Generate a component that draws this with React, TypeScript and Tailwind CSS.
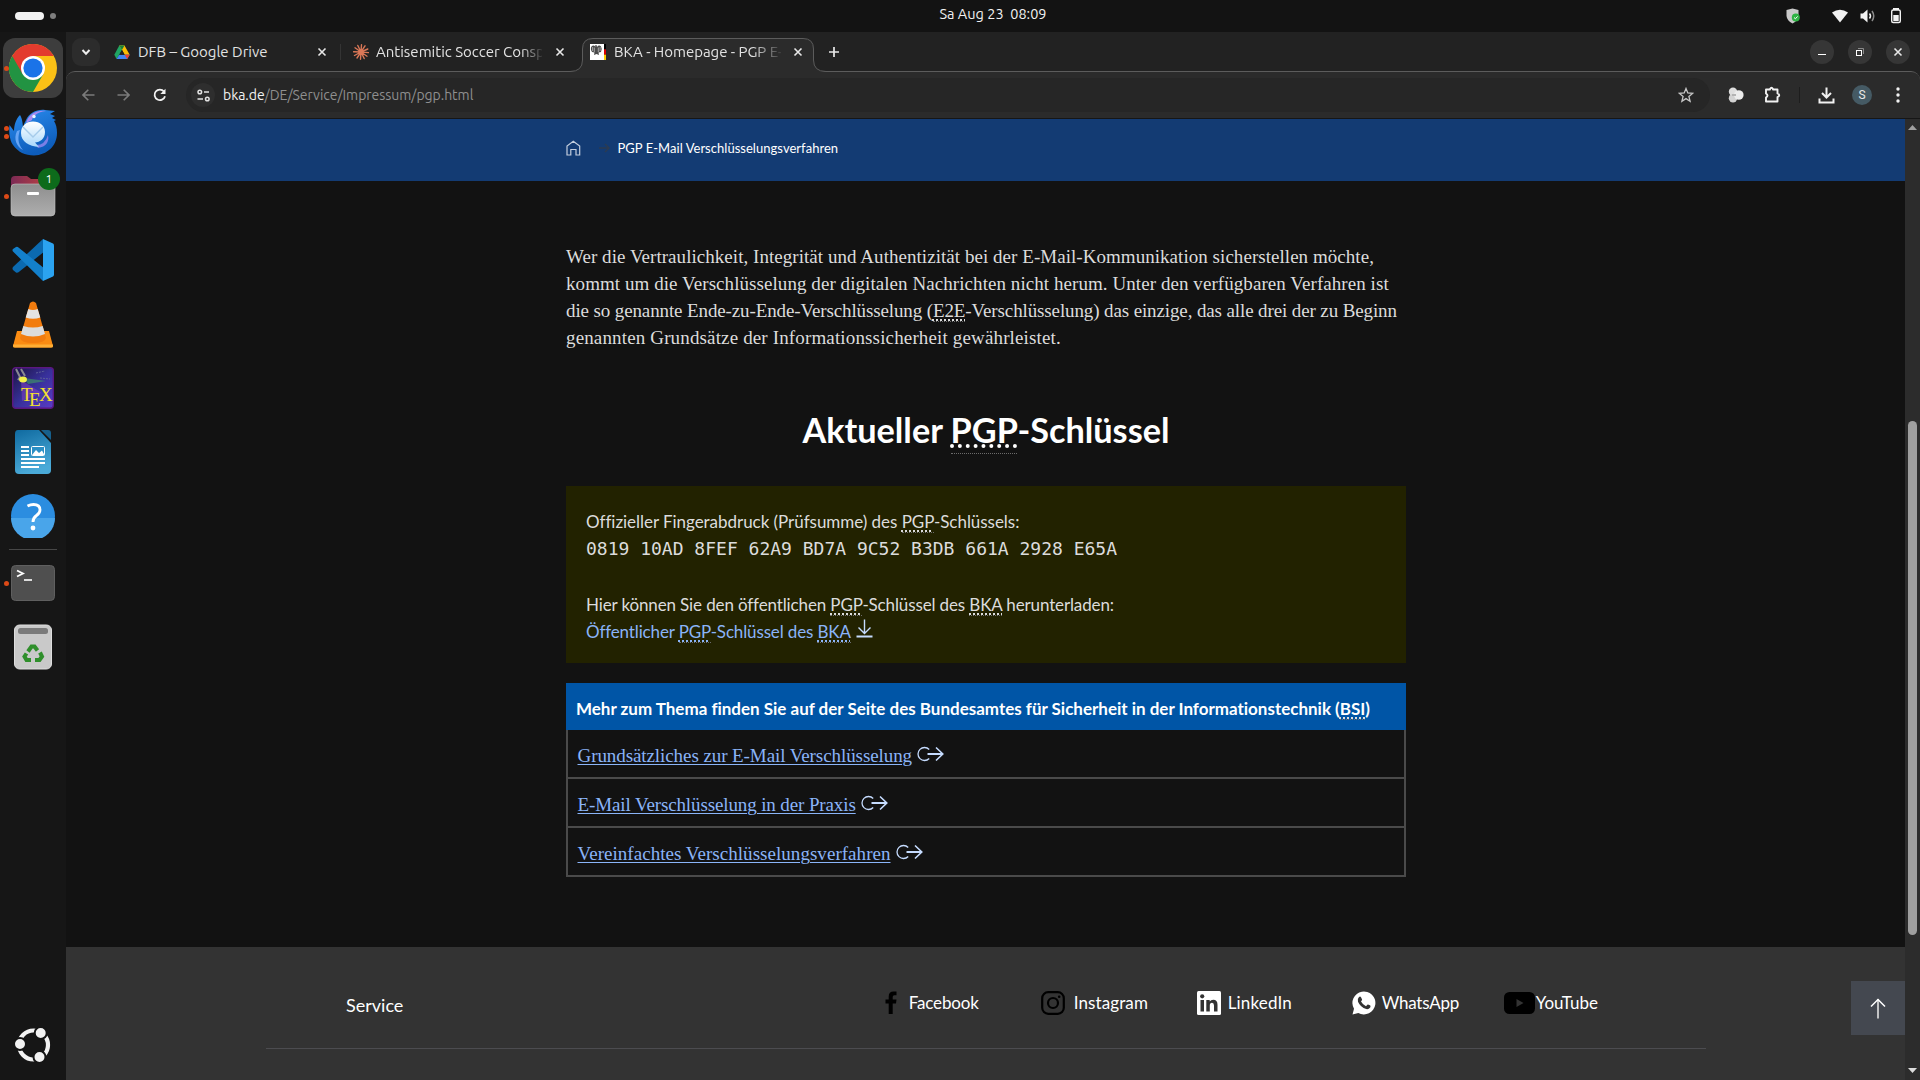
import React from "react";

type Kids = { children: React.ReactNode };

/* ---------- Dock icons ---------- */

const Chrome = () => (
  <svg width="48" height="48" viewBox="0 0 48 48">
    <circle cx="24" cy="24" r="24" fill="#fbc116" />
    <path d="M24 24 L3.2 12 A24 24 0 0 0 24 48 L34.4 30 Z" fill="#229342" />
    <path d="M3.2 12 A24 24 0 0 1 44.8 12 L24 12 L13.6 30 Z" fill="#e33b2e" />
    <circle cx="24" cy="24" r="12" fill="#fff" />
    <circle cx="24" cy="24" r="9.6" fill="#1a73e8" />
  </svg>
);

const Thunderbird = () => (
  <svg className="mt-0.5" width="48" height="48" viewBox="0 0 48 48">
    <defs>
      <linearGradient id="tb" x1="0" y1="0" x2="0.4" y2="1">
        <stop offset="0" stopColor="#2b8df0" />
        <stop offset="1" stopColor="#0d5cba" />
      </linearGradient>
      <linearGradient id="tbw" x1="0" y1="0" x2="0" y2="1">
        <stop offset="0" stopColor="#ffffff" />
        <stop offset="1" stopColor="#a9d8fb" />
      </linearGradient>
    </defs>
    <path d="M0.500 16 C0 22 0 30 4 36 C9 43 16 46.500 25 46.500 C38 46 48 37 48 24 C48 19 47 15 45 12 L47 11 L43 9 L46 7 L41 5 L46 2 L36 1 C28 0 20 4 17 11 L15 15 L14 22 C14 14 13 9 11 6 C7 10 5 16 5 22 Z" fill="url(#tb)" />
    <path d="M17 14 C20 5 27 1 37 2 C28 3 24 7 23 11 Z" fill="#a88bf0" />
    <path d="M8 22 C4 30 8 38 14 41 C8 34 9 27 11 21 Z" fill="#67a5f5" />
    <path d="M27 36 Q36 36 39 26 Q41 37 29 39Z" fill="#7b7fe6" />
    <circle cx="25" cy="7.500" r="1.700" fill="#e8f4ff" />
    <path d="M12 24 C12 17 17 12.500 24 12.500 C31 12.500 36 17 36 23 C36 30 31 33 26 33.500 L30 38 C20 37 12 33 12 24 Z" fill="url(#tbw)" />
    <path d="M14 18 L24 28 L34 18" fill="none" stroke="#a5cbea" strokeWidth="1.400" />
  </svg>
);

const Files = () => (
  <svg className="mt-0.5" width="46" height="44" viewBox="0 0 46 44">
    <defs>
      <linearGradient id="fb" x1="0" x2="1">
        <stop offset="0" stopColor="#7c2a55" />
        <stop offset="1" stopColor="#c8473e" />
      </linearGradient>
      <linearGradient id="ff" x1="0" y1="0" x2="0" y2="1">
        <stop offset="0" stopColor="#8e8e8e" />
        <stop offset="1" stopColor="#aeaeae" />
      </linearGradient>
    </defs>
    <path d="M1 5 Q1 1 5 1 H17 L21 4 H41 Q45 4 45 8 V24 H1 Z" fill="url(#fb)" />
    <rect x="1" y="9" width="44" height="32" rx="4" fill="url(#ff)" stroke="#c2c2c2" strokeWidth="0.600" />
    <rect x="17" y="17" width="12" height="3" rx="1" fill="#fff" />
  </svg>
);

const Code = () => (
  <svg width="42" height="42" viewBox="0 0 42 42">
    <path d="M31 0 L1 28 Q0 29.500 1 31 L4 33.500 Q5.500 34 6.500 33.200 L33 12 Z" fill="#0b6ab0" />
    <path d="M1 12.500 L31 42 L33 30 L6.500 8.500 Q5.500 7.500 4 8 L1 10 Q0 11 1 12.500Z" fill="#1380cb" />
    <path d="M31 0 L41 4.500 Q42 5 42 6.500 V35.500 Q42 37 41 37.500 L31 42 Z" fill="#2ba3f0" />
  </svg>
);

const Vlc = () => (
  <svg width="42" height="48" viewBox="0 0 42 48">
    <path d="M5 31 H37 L41 46 Q41 47.500 39 47.500 H3 Q1 47.500 1 46 Z" fill="#fb8c12" />
    <path d="M1 44.500 H41 V46 Q41 47.500 39 47.500 H3 Q1 47.500 1 46Z" fill="#ffae34" />
    <path d="M18 3 Q21 0 24 3 L34 38 Q33 43 21 43 Q9 43 8 38 Z" fill="#f27c0e" />
    <path d="M16.300 9 Q21 11 25.700 9 L28.300 17.500 Q21 20 13.700 17.500 Z" fill="#e4e4e4" />
    <path d="M11.300 26 Q21 29 30.700 26 L33 34 Q21 39 9 34 Z" fill="#dcdcdc" />
  </svg>
);

const Tex = () => (
  <svg width="42" height="42" viewBox="0 0 42 42">
    <defs>
      <linearGradient id="tx" x1="0" y1="0" x2="1" y2="1">
        <stop offset="0" stopColor="#1b1440" />
        <stop offset="0.500" stopColor="#37309a" />
        <stop offset="1" stopColor="#5a3cc8" />
      </linearGradient>
    </defs>
    <rect x="0.700" y="0.700" width="40.600" height="40.600" rx="3" fill="url(#tx)" stroke="#5b1780" strokeWidth="1.400" />
    <path d="M9 13 L30 26 L10 34 Z" fill="#7a3fc0" opacity="0.600" />
    <path d="M12 11 L34 14 L16 17 Z" fill="#3e8f6c" opacity="0.700" />
    <path d="M4 2 L8 10 L6 13 M9 2 L13 9" stroke="#8a8a92" strokeWidth="2" fill="none" />
    <ellipse cx="11" cy="12.500" rx="4" ry="3" fill="#f1f04a" />
    <path d="M24 6 L33 4 M28 11 L38 12" stroke="#5c5f99" strokeWidth="1" strokeDasharray="2 1" />
    <g fill="#f4e02c" fontFamily="Liberation Serif, serif" fontSize="19">
      <text x="9" y="34">T</text>
      <text x="17" y="39">E</text>
      <text x="27" y="34">X</text>
    </g>
  </svg>
);

const Writer = () => (
  <svg width="38" height="46" viewBox="0 0 38 46">
    <defs>
      <linearGradient id="wr" x1="0" y1="0" x2="0.300" y2="1">
        <stop offset="0" stopColor="#0f6aa0" />
        <stop offset="1" stopColor="#4aaad8" />
      </linearGradient>
    </defs>
    <path d="M4 1 H25 L37 14 V41 Q37 45 33 45 H5 Q1 45 1 41 V5 Q1 1 4 1Z" fill="url(#wr)" />
    <path d="M27 1 H34 Q37 1 37 4 V11 Z" fill="#17608c" />
    <g fill="#fff">
      <rect x="7" y="17" width="8" height="2" />
      <rect x="7" y="21" width="8" height="2" />
      <rect x="7" y="25" width="8" height="2" />
      <rect x="7" y="29" width="24" height="2" />
      <rect x="7" y="33" width="24" height="2" />
      <rect x="7" y="37" width="18" height="2" />
    </g>
    <rect x="17.500" y="17.500" width="13" height="9" rx="1" fill="#2b8fc5" stroke="#fff" />
    <path d="M18 26 L22 21 L25 24 L28 21.500 L30.500 26Z" fill="#fff" />
  </svg>
);

const Help = () => (
  <svg width="44" height="44" viewBox="0 0 44 44">
    <circle cx="22" cy="22" r="22" fill="#2b8de0" />
    <path d="M0 24 H44 A22 22 0 0 1 0 24Z" fill="#49a5ea" />
    <path d="M16.500 12 Q19.500 10.500 22.500 10.500 Q29 10.500 29 16 Q29 19 25.500 21.500 Q22 24 22 28" fill="none" stroke="#fff" strokeWidth="2.800" />
    <circle cx="22" cy="34" r="2.400" fill="#fff" />
  </svg>
);

const Terminal = () => (
  <svg width="44" height="36" viewBox="0 0 44 36">
    <rect x="0.500" y="0.500" width="43" height="35" rx="4" fill="#4f4f4f" stroke="#5f5f5f" />
    <path d="M6 5.500 L12 8.500 L6 11.500" fill="none" stroke="#fff" strokeWidth="1.800" />
    <path d="M13 15 H21" stroke="#fff" strokeWidth="1.600" />
  </svg>
);

const Trash = () => (
  <svg width="38" height="46" viewBox="0 0 38 46">
    <rect x="0.500" y="1" width="37" height="44" rx="5" fill="#c9c9c9" stroke="#dedede" />
    <rect x="4" y="4" width="30" height="6" rx="2.500" fill="#7a7a7a" />
    <g fill="none" stroke="#2f8f2b" strokeWidth="4">
      <path d="M14 27.500 L17.500 22.500 H20.500 L23.500 26.500" />
      <path d="M26 28.500 L28 32.500 L25.500 36 H21" />
      <path d="M17 36 H12.500 L10.500 32.500 L12.500 29.500" />
    </g>
  </svg>
);

const Ubuntu = () => (
  <svg width="38" height="36" viewBox="0 0 38 36">
    <circle cx="19.500" cy="18" r="14.500" fill="none" stroke="#f2f2f2" strokeWidth="4.200" />
    <g fill="#f2f2f2" stroke="#151515" strokeWidth="2">
      <circle cx="6" cy="17" r="6" />
      <circle cx="26.700" cy="6" r="6" />
      <circle cx="25.500" cy="30" r="6" />
    </g>
  </svg>
);

function DockItem({ dots = 0, active = false, children }: Kids & { dots?: number; active?: boolean }) {
  return (
    <div className="flex h-16 w-[66px] items-center">
      <div className="flex w-[9px] shrink-0 flex-col items-end gap-[3px]">
        {Array.from({ length: dots }, (_, i) => (
          <i key={i} className="z-10 h-[5px] w-[5px] rounded-full bg-[#dc4a17]" />
        ))}
      </div>
      <div className={active ? "-ml-1.5 flex h-[60px] w-[60px] items-center justify-center rounded-xl bg-[#3d3d3d]" : "flex w-12 items-center justify-center"}>
        {children}
      </div>
    </div>
  );
}

function Dock() {
  return (
    <aside className="flex w-[66px] shrink-0 flex-col bg-[#161616] pt-1">
      <DockItem dots={1} active><Chrome /></DockItem>
      <DockItem dots={2}><Thunderbird /></DockItem>
      <DockItem dots={1}>
        <div className="relative">
          <Files />
          <span className="absolute -top-[5px] left-[28px] flex h-[22px] w-[22px] items-center justify-center rounded-full bg-[#0d6b1b] text-[12px] text-white">1</span>
        </div>
      </DockItem>
      <DockItem><Code /></DockItem>
      <DockItem><Vlc /></DockItem>
      <DockItem><Tex /></DockItem>
      <DockItem><Writer /></DockItem>
      <DockItem><Help /></DockItem>
      <div className="mx-[9px] my-px h-px bg-[#474747]" />
      <DockItem dots={1}><Terminal /></DockItem>
      <DockItem><Trash /></DockItem>
      <div className="mt-auto mb-[17px] ml-[14px]"><Ubuntu /></div>
    </aside>
  );
}

/* ---------- Top bar ---------- */

function TopBar() {
  return (
    <header className="grid h-8 shrink-0 grid-cols-[933px_120px_1fr] items-center bg-[#131313] text-[14.500px] text-[#f2f2f2]">
      <div className="flex items-center gap-1.5 pl-[15px]">
        <i className="h-2 w-[29px] rounded-full bg-[#f2f2f2]" />
        <i className="h-1.5 w-1.5 rounded-full bg-[#7e7e7e]" />
      </div>
      <div className="-mt-[3px] text-center text-[14.500px] leading-none whitespace-pre">Sa Aug 23  08:09</div>
      <div className="flex items-center justify-end pr-[18px]">
        <svg className="mr-[32px]" width="14" height="16" viewBox="0 0 14 16">
          <path d="M0.500 2 L6.500 0.500 L12.500 2 V8 Q12 12.500 6.500 15.500 Q1 12.500 0.500 8Z" fill="#c9c9c9" />
          <circle cx="9.800" cy="9.500" r="4" fill="#2fb344" />
          <path d="M8 9.500 L9.400 10.800 L11.600 8.400" fill="none" stroke="#fff" />
        </svg>
        <svg className="mr-[12px]" width="16" height="14" viewBox="0 0 16 14">
          <path d="M0 3.500 Q8 -2 16 3.500 L8 13.500Z" fill="#f2f2f2" />
        </svg>
        <svg className="mr-[14px]" width="16" height="16" viewBox="0 0 16 16">
          <path d="M0.500 5.500 H3 L7.500 1.500 V14.500 L3 10.500 H0.500Z" fill="#f2f2f2" />
          <path d="M9.500 5.500 Q11.500 8 9.500 10.500" fill="none" stroke="#f2f2f2" strokeWidth="1.500" />
          <path d="M12 3 Q15.500 8 12 13" fill="none" stroke="#8b8b8b" strokeWidth="1.500" />
        </svg>
        <svg width="12" height="16" viewBox="0 0 12 16">
          <rect x="3" y="0" width="6" height="2" fill="#f2f2f2" />
          <rect x="1.700" y="2" width="8.600" height="12.500" rx="1.500" fill="none" stroke="#f2f2f2" strokeWidth="1.400" />
          <rect x="3.300" y="7" width="5.400" height="6" fill="#f2f2f2" />
        </svg>
      </div>
    </header>
  );
}

/* ---------- Browser chrome ---------- */

const Cross = () => (
  <svg width="10" height="10" viewBox="0 0 10 10" className="shrink-0">
    <path d="M1.500 1.500 L8.500 8.500 M8.500 1.500 L1.500 8.500" stroke="#e8e8e8" strokeWidth="1.600" />
  </svg>
);

const Drive = () => (
  <svg width="16" height="15" viewBox="0 0 16 15" className="shrink-0">
    <path d="M5.300 0.500 H10.500 L5.200 9.700 L2.600 14 L0.300 9.700Z" fill="#1fa463" />
    <path d="M5.300 0.500 H10.500 L15.700 9.700 H10.600 L8 5Z" fill="#fbbc04" />
    <path d="M5.200 9.700 H15.700 L13.200 14 H2.600Z" fill="#4285f4" />
    <path d="M10.600 9.700 H15.700 L13.200 14Z" fill="#ea4335" />
    <path d="M5.300 0.500 H10.500 L7.900 5Z" fill="#188038" />
    <path d="M8 5 L5.300 9.700 H10.700Z" fill="#222222" />
  </svg>
);

const Burst = () => (
  <svg width="16" height="16" viewBox="0 0 16 16" className="shrink-0">
    <g stroke="#d97757" strokeWidth="1.400" strokeLinecap="round">
      <path d="M8 8 L8.500 0.800 M8 8 L12 1.800 M8 8 L14.800 5 M8 8 L15.500 8.600 M8 8 L14 12.200 M8 8 L11.200 14.500 M8 8 L7.500 15.200 M8 8 L4 14 M8 8 L1.500 11.500 M8 8 L0.600 7.800 M8 8 L2 3.800 M8 8 L4.800 1.500" />
    </g>
    <circle cx="8" cy="8" r="2.600" fill="#d97757" />
  </svg>
);

const Eagle = () => (
  <svg width="16" height="16" viewBox="0 0 16 16" className="shrink-0">
    <rect width="14" height="16" fill="#fff" />
    <rect x="14" width="2" height="5.400" fill="#000" />
    <rect x="14" y="5.400" width="2" height="5.300" fill="#dd0000" />
    <rect x="14" y="10.700" width="2" height="5.300" fill="#ffce00" />
    <path d="M5 1.500 L6.500 1 L7 3 Q9 0.500 11 2.500 Q12.500 5 11 8 L8.500 8.500 L9 11 L6.500 10 L4 11 L4.500 8.500 L2 8 Q0 5 1.500 2.500 Q3.500 0.500 5.500 3Z" fill="#4a4a4a" />
    <path d="M2.600 3 V7 M4.300 3.500 V8 M8.300 3.500 V8 M10.100 3 V7" stroke="#cfcfcf" strokeWidth="0.700" />
  </svg>
);

function WinButton({ children }: Kids) {
  return <div className="flex h-6 w-6 items-center justify-center rounded-full bg-[#363636]">{children}</div>;
}

function TabStrip() {
  return (
    <div className="flex h-[39px] shrink-0 bg-[#222222] text-[15px] leading-none text-[#e3e3e3]">
      <div className="mt-1.5 ml-1.5 flex h-7 w-7 items-center justify-center rounded-[9px] bg-[#2c2c2c]">
        <svg width="10" height="10" viewBox="0 0 10 10"><path d="M1.500 3 L5 6.700 L8.500 3" fill="none" stroke="#eee" strokeWidth="2" /></svg>
      </div>
      <div className="flex h-10 w-[241px] items-center pl-3.5">
        <Drive />
        <span className="-mt-px ml-2 w-[180px] whitespace-nowrap">DFB – Google Drive</span>
        <Cross />
        <i className="ml-[13px] h-4 w-px shrink-0 bg-[#343434]" />
      </div>
      <div className="flex h-10 w-[241px] items-center pl-3">
        <Burst />
        <span className="-mt-px ml-[7px] w-[166px] overflow-hidden [mask-image:linear-gradient(to_right,#000_145px,transparent_168px)] py-1 whitespace-nowrap">Antisemitic Soccer Conspi</span>
        <span className="ml-[13px] flex"><Cross /></span>
      </div>
      <div className="relative z-10 flex h-10 w-[232px]">
        <svg className="absolute top-[6px] -left-3" width="256" height="34" viewBox="0 0 256 34">
          <path d="M0 33.500 Q12.500 33.500 12.500 22 V11 Q12.500 0.500 23 0.500 H233 Q243.500 0.500 243.500 11 V22 Q243.500 33.500 256 33.500 V34 H0Z" fill="#2b2b2b" />
          <path d="M0 33.500 Q12.500 33.500 12.500 22 V11 Q12.500 0.500 23 0.500 H233 Q243.500 0.500 243.500 11 V22 Q243.500 33.500 256 33.500" fill="none" stroke="#5c5c5c" />
        </svg>
        <div className="relative flex h-10 items-center pl-2">
          <Eagle />
          <span className="-mt-px ml-2 w-[167px] overflow-hidden [mask-image:linear-gradient(to_right,#000_138px,transparent_170px)] py-1 tracking-[-0.040px] whitespace-nowrap">BKA - Homepage - PGP E-</span>
          <span className="ml-3 flex"><Cross /></span>
        </div>
      </div>
      <div className="flex h-10 items-center pl-[14px]">
        <svg width="12" height="12" viewBox="0 0 12 12"><path d="M6 1 V11 M1 6 H11" stroke="#e8e8e8" strokeWidth="1.700" /></svg>
      </div>
      <div className="ml-auto flex h-10 items-center gap-[14px] pr-[10px]">
        <WinButton><svg width="10" height="10" viewBox="0 0 10 10"><path d="M1 7.500 H9" stroke="#fff" /></svg></WinButton>
        <WinButton>
          <svg width="10" height="10" viewBox="0 0 10 10">
            <path d="M3 1.500 H8.500 V7" fill="none" stroke="#8a8a8a" />
            <rect x="1.500" y="3.500" width="5" height="5" fill="none" stroke="#fff" />
          </svg>
        </WinButton>
        <WinButton><Cross /></WinButton>
      </div>
    </div>
  );
}

function Toolbar() {
  return (
    <div className="flex h-12 shrink-0 items-center rounded-t-[9px] border-t border-b border-t-[#5c5c5c] border-b-[#161616] bg-[#2b2b2b]">
      <div className="flex w-[120px] items-center pl-4">
        <svg width="13" height="12" viewBox="0 0 13 12"><path d="M12.500 6 H1 M6.300 0.700 L1 6 L6.300 11.300" fill="none" stroke="#7b7b7b" strokeWidth="1.600" /></svg>
        <svg className="ml-[22px]" width="13" height="12" viewBox="0 0 13 12"><path d="M0.500 6 H12 M6.700 0.700 L12 6 L6.700 11.300" fill="none" stroke="#7b7b7b" strokeWidth="1.600" /></svg>
        <svg className="ml-[23px]" width="14" height="14" viewBox="0 0 14 14">
          <path d="M12 8.200 A5.300 5.300 0 1 1 11 3.500" fill="none" stroke="#f2f2f2" strokeWidth="1.800" />
          <path d="M12.500 0.800 V6 H7.300Z" fill="#f2f2f2" />
        </svg>
      </div>
      <div className="flex h-[34px] w-[1524px] items-center rounded-full bg-[#262626]">
        <div className="ml-[5px] flex h-6 w-6 items-center justify-center rounded-full bg-[#2e2e2e]">
          <svg width="13" height="13" viewBox="0 0 13 13" fill="none" stroke="#e3e3e3" strokeWidth="1.500">
            <circle cx="2.800" cy="3" r="1.800" /><path d="M7 3 H12 M0.500 10 H6" /><circle cx="10.300" cy="10" r="1.800" />
          </svg>
        </div>
        <div className="ml-2 text-[14px] leading-none tracking-[-0.030px] text-[#8f8f8f]"><span className="text-[#f2f2f2]">bka.de</span>/DE/Service/Impressum/pgp.html</div>
        <svg className="mr-4 ml-auto" width="16" height="16" viewBox="0 0 16 16">
          <path d="M8 1.500 L9.800 6 L14.600 6.400 L10.900 9.500 L12.100 14.200 L8 11.600 L3.900 14.200 L5.100 9.500 L1.400 6.400 L6.200 6Z" fill="none" stroke="#c6c6c6" strokeWidth="1.300" />
        </svg>
      </div>
      <div className="flex flex-1 items-center pl-[18px]">
        <svg width="16" height="16" viewBox="0 0 16 16">
          <circle cx="5" cy="4.700" r="4.200" fill="#dedede" /><circle cx="5" cy="11.300" r="4.200" fill="#d2d2d2" /><circle cx="10.800" cy="8" r="4.800" fill="#ececec" />
          <path d="M4 8 H8" stroke="#b3b3b3" strokeWidth="2" />
        </svg>
        <svg className="ml-5" width="18" height="18" viewBox="0 0 18 18">
          <path d="M2 3.500 H6 V3 Q7.500 0.500 9 3 V3.500 H13.500 V7.500 Q17 9 13.500 11 V15.500 H2 V11.500 Q5 9.500 2 7.500Z" fill="none" stroke="#f2f2f2" strokeWidth="1.900" strokeLinejoin="round" />
        </svg>
        <i className="ml-[17px] h-4 w-px bg-[#1d1d1d]" />
        <svg className="ml-[18px]" width="17" height="17" viewBox="0 0 17 17">
          <path d="M8.500 0.500 V10 M4 6 L8.500 10.500 L13 6 M1.500 11.500 V15.500 H15.500 V11.500" fill="none" stroke="#f2f2f2" strokeWidth="2" />
        </svg>
        <span className="ml-[17px] flex h-5 w-5 items-center justify-center rounded-full bg-[#455a64] font-[Roboto,sans-serif] text-[12px] text-[#e8e8e8]">S</span>
        <svg className="ml-6" width="4" height="16" viewBox="0 0 4 16" fill="#f2f2f2"><circle cx="2" cy="2" r="1.700" /><circle cx="2" cy="8" r="1.700" /><circle cx="2" cy="14" r="1.700" /></svg>
      </div>
    </div>
  );
}

/* ---------- Web page ---------- */

function Abbr({ children, link = false }: Kids & { link?: boolean }) {
  return (
    <abbr className={(link ? "decoration-[#8ab4f8]" : "decoration-[#dcdcdc]") + " border-b border-dotted border-[#6b6b6b] underline decoration-dotted decoration-2 underline-offset-[2px]"}>
      {children}
    </abbr>
  );
}

function LinkRow({ children }: Kids) {
  return (
    <div className="flex h-[49px] items-center border-x-2 border-b-2 border-[#4a4a4a] pl-[9.500px]">
      <a className="mt-[4px] font-['Liberation_Serif',serif] text-[19px] leading-[27px] whitespace-nowrap text-[#8ab4f8] underline decoration-1 underline-offset-[2px]">{children}</a>
      <svg className="ml-[5px]" width="27" height="16" viewBox="0 0 27 16" fill="none" stroke="#c6dcff">
        <path d="M12.200 3.500 A6.500 6.500 0 1 0 12.200 12.500" strokeWidth="1.300" />
        <path d="M10.500 8 H26" strokeWidth="2" />
        <path d="M19 1.500 L25.800 8 L19 14.500" strokeWidth="1.600" />
      </svg>
    </div>
  );
}

function Social() {
  const label = "text-[17px] leading-[27px] whitespace-nowrap text-white";
  return (
    <div className="flex items-center">
      <div className="flex w-[156px] items-center">
        <svg width="12" height="23" viewBox="0 0 12 23"><path d="M3.700 23 V12.500 H0.500 V8.500 H3.700 V5.500 Q3.700 0.500 8.500 0.500 H11.500 V4.300 H9.300 Q7.700 4.300 7.700 6 V8.500 H11.500 L11 12.500 H7.700 V23Z" fill="#000" /></svg>
        <span className={label + " ml-3 tracking-[-0.150px]"}>Facebook</span>
      </div>
      <div className="flex w-[156px] items-center">
        <svg width="24" height="24" viewBox="0 0 24 24" fill="none" stroke="#000" strokeWidth="2.200">
          <rect x="1.200" y="1.200" width="21.600" height="21.600" rx="6" /><circle cx="12" cy="12" r="5" /><circle cx="18.200" cy="5.800" r="1.300" fill="#000" stroke="none" />
        </svg>
        <span className={label + " ml-[9px] tracking-[0.100px]"}>Instagram</span>
      </div>
      <div className="flex w-[155px] items-center">
        <svg width="24" height="24" viewBox="0 0 24 24">
          <rect width="24" height="24" rx="1.500" fill="#fff" />
          <path d="M3.500 9 H7 V20.500 H3.500Z M9.300 9 H12.700 V10.500 Q13.800 8.700 16.200 8.700 Q20.500 8.700 20.500 13.800 V20.500 H17 V14.500 Q17 11.800 15 11.800 Q12.800 11.800 12.800 14.500 V20.500 H9.300Z" fill="#333" />
          <circle cx="5.200" cy="5.300" r="2.100" fill="#333" />
        </svg>
        <span className={label + " ml-[7px] tracking-[0.150px]"}>LinkedIn</span>
      </div>
      <div className="flex w-[152px] items-center">
        <svg width="24" height="24" viewBox="0 0 24 24">
          <path d="M0.500 23.500 L2 17.800 A11.500 11.500 0 1 1 6.300 22Z" fill="#fff" />
          <path d="M7 6 Q8.300 5 9 6.300 L10.100 8.600 Q10 9.500 9 10.600 Q10.800 13.900 14 15.200 L15.400 13.700 Q16 13.300 18.300 14.600 Q18.800 15.200 18.200 16.600 Q16.500 18.600 14.200 18 Q8.500 16.500 6 10.800 Q5.100 7.800 7 6Z" fill="#333" />
        </svg>
        <span className={label + " ml-1.5 tracking-[-0.250px]"}>WhatsApp</span>
      </div>
      <div className="flex items-center">
        <svg width="31" height="22" viewBox="0 0 31 22"><rect width="31" height="22" rx="5.500" fill="#000" /><path d="M12.500 7 L19.500 11 L12.500 15Z" fill="#333" /></svg>
        <span className={label + " ml-px"}>YouTube</span>
      </div>
    </div>
  );
}

function Page() {
  return (
    <main className="flex min-w-0 flex-1 flex-col bg-[#121212] font-[Lato,sans-serif] text-[#dcdcdc]">
      <div className="flex h-[62px] shrink-0 items-start bg-[#133b73] pt-[21px] pl-[500px]">
        <svg width="15" height="16" viewBox="0 0 15 16" fill="none" stroke="#c3cede" strokeWidth="1.200">
          <path d="M1 15 V6 L7.300 1.200 L13.700 6 V15 H10 V9.500 H4.800 V15Z" />
        </svg>
        <svg className="mt-[3px] ml-[18px]" width="11" height="10" viewBox="0 0 11 10" fill="none" stroke="#2b3b52" strokeWidth="1.500"><path d="M0 5 H10 M6 1 L10 5 L6 9" /></svg>
        <span className="ml-[7.500px] text-[13px] leading-[17px] tracking-[0.030px] text-white">PGP E-Mail Verschlüsselungsverfahren</span>
      </div>

      <div className="ml-[500px] w-[840px] shrink-0">
        <p className="mt-[62px] font-['Liberation_Serif',serif] text-[19px] leading-[27px] whitespace-nowrap">
          <span className="tracking-[0.045px]">Wer die Vertraulichkeit, Integrität und Authentizität bei der E-Mail-Kommunikation sicherstellen möchte,</span><br />
          <span className="tracking-[0.065px]">kommt um die Verschlüsselung der digitalen Nachrichten nicht herum. Unter den verfügbaren Verfahren ist</span><br />
          <span className="tracking-[-0.120px]">die so genannte Ende-zu-Ende-Verschlüsselung (<Abbr>E2E</Abbr>-Verschlüsselung) das einzige, das alle drei der zu Beginn</span><br />
          <span className="tracking-[0.145px]">genannten Grundsätze der Informationssicherheit gewährleistet.</span>
        </p>
        <h1 className="mt-[57px] text-center text-[34.250px] leading-[44px] font-bold text-white">
          Aktueller <abbr className="border-b border-dotted border-[#6b6b6b] pb-[3px] underline decoration-dotted decoration-4 underline-offset-[1px]">PGP</abbr>-Schlüssel
        </h1>
        <section className="mt-[34px] h-[177px] bg-[#222200] px-5 pt-[22px] text-[17px] leading-[27px] whitespace-nowrap">
          <p className="tracking-[-0.040px]">Offizieller Fingerabdruck (Prüfsumme) des <Abbr>PGP</Abbr>-Schlüssels:</p>
          <p className="font-['DejaVu_Sans_Mono',monospace] text-[18px]">0819 10AD 8FEF 62A9 BD7A 9C52 B3DB 661A 2928 E65A</p>
          <p className="mt-[29px] tracking-[-0.130px]">Hier können Sie den öffentlichen <Abbr>PGP</Abbr>-Schlüssel des <Abbr>BKA</Abbr> herunterladen:</p>
          <p className="flex items-center tracking-[-0.140px] text-[#8ab4f8]">
            <a>Öffentlicher <Abbr link>PGP</Abbr>-Schlüssel des <Abbr link>BKA</Abbr></a>
            <svg className="-mt-[7px] ml-[5px]" width="17" height="19" viewBox="0 0 17 19" fill="none" stroke="#c6dcff">
              <path d="M8.500 0.500 V14.500 M2.500 8.500 L8.500 14.500 L14.500 8.500" strokeWidth="1.400" /><path d="M0.500 17.500 H16.500" strokeWidth="2" />
            </svg>
          </p>
        </section>
        <section className="mt-5">
          <h2 className="h-[47px] bg-[#0055a6] pt-3 pl-[10px] text-[17px] leading-[27px] font-bold tracking-[-0.010px] whitespace-nowrap text-white">
            Mehr zum Thema finden Sie auf der Seite des Bundesamtes für Sicherheit in der Informationstechnik (<Abbr>BSI</Abbr>)
          </h2>
          <LinkRow><span className="tracking-[-0.080px]">Grundsätzliches zur E-Mail Verschlüsselung</span></LinkRow>
          <LinkRow><span className="tracking-[-0.120px]">E-Mail Verschlüsselung in der Praxis</span></LinkRow>
          <LinkRow><span className="tracking-[0.040px]">Vereinfachtes Verschlüsselungsverfahren</span></LinkRow>
        </section>
      </div>

      <footer className="relative mt-auto h-[133px] shrink-0 bg-[#333333] px-[199px]">
        <div className="ml-px flex h-[102px] items-start justify-between border-b border-[#4c4c50] pt-[42px] pr-[108px] pl-[80px]">
          <span className="mt-[3px] text-[18px] leading-[27px] text-white">Service</span>
          <Social />
        </div>
        <button className="absolute top-[34px] right-0 flex h-[54px] w-[54px] items-center justify-center bg-[#444850]">
          <svg width="16" height="21" viewBox="0 0 16 21" fill="none" stroke="#fff"><path d="M8 1 V20.500" strokeWidth="1.700" stroke="#dadada" /><path d="M1 8.500 L8 1.500 L15 8.500" strokeWidth="1.500" /></svg>
        </button>
      </footer>
    </main>
  );
}

function Scrollbar() {
  return (
    <div className="flex w-[15px] shrink-0 flex-col items-center bg-[#2c2c2c]">
      <svg className="mt-1.5" width="9" height="5" viewBox="0 0 9 5"><path d="M0 5 L4.500 0 L9 5Z" fill="#9f9f9f" /></svg>
      <div className="mt-[291px] h-[514px] w-[9px] rounded-full bg-[#9f9f9f]" />
      <svg className="mt-auto mb-[7px]" width="9" height="5" viewBox="0 0 9 5"><path d="M0 0 L4.500 5 L9 0Z" fill="#dcdcdc" /></svg>
    </div>
  );
}

export default function App() {
  return (
    <div className="flex h-[1080px] w-[1920px] flex-col overflow-hidden bg-[#131313] font-[Ubuntu,'Open_Sans',cursive]">
      <TopBar />
      <div className="flex min-h-0 flex-1">
        <Dock />
        <div className="flex min-w-0 flex-1 flex-col bg-[#222222]">
          <TabStrip />
          <Toolbar />
          <div className="flex min-h-0 flex-1">
            <Page />
            <Scrollbar />
          </div>
        </div>
      </div>
    </div>
  );
}
